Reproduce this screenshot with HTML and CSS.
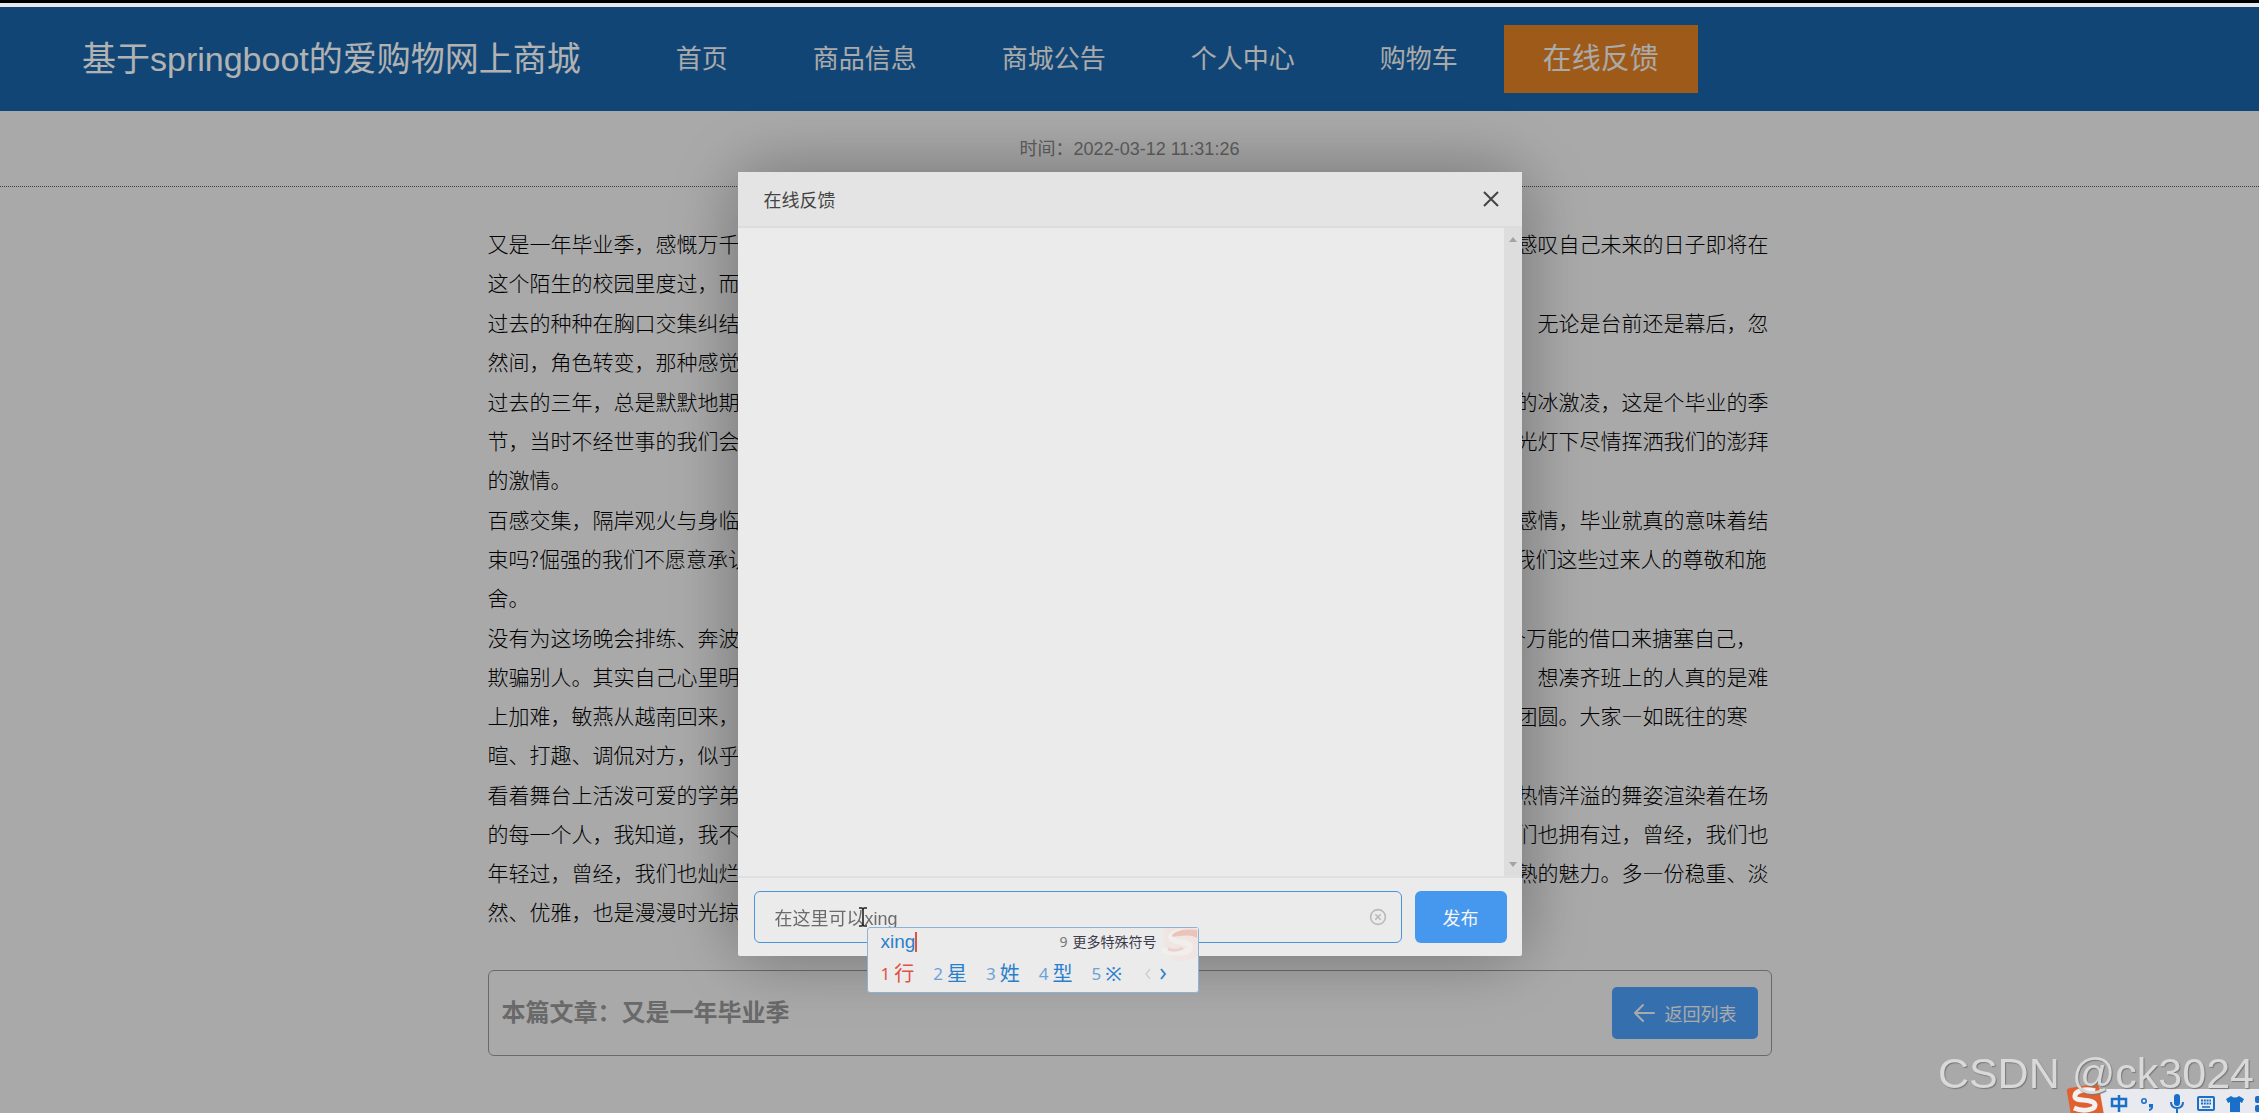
FILE: index.html
```html
<!DOCTYPE html>
<html lang="zh-CN">
<head>
<meta charset="utf-8">
<title>基于springboot的爱购物网上商城</title>
<link rel="stylesheet" href="styles.css">
</head>
<body>
<div class="window-edge"></div>
<header class="site-header">
  <div class="brand">基于springboot的爱购物网上商城</div>
  <nav class="nav">
    <a href="#">首页</a>
    <a href="#">商品信息</a>
    <a href="#">商城公告</a>
    <a href="#">个人中心</a>
    <a href="#">购物车</a>
    <a href="#" class="active">在线反馈</a>
  </nav>
</header>
<div class="meta">时间：2022-03-12 11:31:26</div>
<main class="content">
  <article class="article">
    <p>又是一年毕业季，感慨万千，还记得自己刚刚进学校那时候的情景，我拖着沉重的行李箱站在那偌大的操场上，感叹自己未来的日子即将在<br>这个陌生的校园里度过，而如今断然没有了当时的感慨，我想这就是成长吧！</p>
    <p>过去的种种在胸口交集纠结，像打翻的五味瓶，甜蜜，酸楚，苦涩，一并涌上心头。一直都是毕业晚会的参与者　无论是台前还是幕后，忽<br>然间，角色转变，那种感觉确实难以用语言表达。</p>
    <p>过去的三年，总是默默地期盼着这个好雨时节，因为这时候，会有灿烂的阳光，会有满目的百花争艳，会有香甜的冰激凌，这是个毕业的季<br>节，当时不经世事的我们会殷切地期待学校的毕业晚会，可以让我们在舞台上展现自己，能够站在那个五彩的聚光灯下尽情挥洒我们的澎拜<br>的激情。</p>
    <p>百感交集，隔岸观火与身临其境的感觉竟是如此不同。从来没有想过，我们彼此之间会有如此深厚，难以割舍的感情，毕业就真的意味着结<br>束吗?倔强的我们不愿意承认，谁能舍得离开这里?当我们挥手告别的时候，看到的是学弟学妹们眼中所流露出对我们这些过来人的尊敬和施<br>舍。</p>
    <p>没有为这场晚会排练、奔波、劳累过?也许是忙于实习，忙于找工作，忙于写论文，于是我们总可以找到这样一个万能的借口来搪塞自己，<br>欺骗别人。其实自己心里明白，很多事情都已不再像从前那样，大家各奔东西，为了各自的生活四处奔波忙碌着　想凑齐班上的人真的是难<br>上加难，敏燕从越南回来，刚好赶上这次聚会，多年的老同学终于又能够坐在同一张桌子旁，吃上一顿热闹的大团圆。大家—如既往的寒<br>暄、打趣、调侃对方，似乎一切都没有改变。</p>
    <p>看着舞台上活泼可爱的学弟学妹们，听着他们悠扬动听的歌声，青春的气息扑面而来，他们用最真挚的笑容和那热情洋溢的舞姿渲染着在场<br>的每一个人，我知道，我不羡慕他们的年轻，也不嫉妒他们的激情，因为那样的青春岁月，那样的欢声笑语，我们也拥有过，曾经，我们也<br>年轻过，曾经，我们也灿烂过，如今的我们，少了一份轻狂与冲动，多了一份理智和从容，更有了一种自己的成熟的魅力。多—份稳重、淡<br>然、优雅，也是漫漫时光掠过的痕迹。</p>
  </article>
  <section class="article-bar">
    <h2>本篇文章：又是一年毕业季</h2>
    <button type="button" class="back">
      <svg width="22" height="20" viewBox="0 0 22 20" fill="none" stroke="currentColor" stroke-width="2" stroke-linecap="round" stroke-linejoin="round"><path d="M21 10H2M10 2L2 10L10 18"/></svg>
      <span>返回列表</span>
    </button>
  </section>
</main>

<div class="overlay">
  <form class="modal" role="dialog" aria-labelledby="dialog-title">
    <div class="modal-head">
      <span id="dialog-title">在线反馈</span>
      <button type="button" class="close" aria-label="关闭">
        <svg width="16" height="16" viewBox="0 0 16 16" fill="none" stroke="currentColor" stroke-width="2"><path d="M1 1L15 15M15 1L1 15"/></svg>
      </button>
    </div>
    <div class="messages">
      <div class="scroll">
        <svg width="10" height="6" viewBox="0 0 10 6"><path d="M1 5L5 0L9 5Z" fill="#a3a3a3"/></svg>
        <svg width="10" height="6" viewBox="0 0 10 6"><path d="M1 1L5 6L9 1Z" fill="#a3a3a3"/></svg>
      </div>
    </div>
    <div class="compose">
      <div class="field">
        <input type="text" aria-label="反馈内容" value="在这里可以xing">
        <svg class="clear" width="18" height="18" viewBox="0 0 18 18" fill="none" stroke="#b9b9b9" stroke-width="1.6"><circle cx="9" cy="9" r="7.4"/><path d="M6.3 6.3L11.7 11.7M11.7 6.3L6.3 11.7"/></svg>
        <svg class="ibeam" width="10" height="20" viewBox="0 0 10 20" fill="none" stroke="#222" stroke-width="1.6"><path d="M1 1H3.5Q5 1 5 3Q5 1 6.500 1H9M5 3V17M1 19H3.500Q5 19 5 17Q5 19 6.500 19H9"/></svg>
        <div class="ime">
          <svg class="ime-logo" width="42" height="34" viewBox="0 0 42 34" fill="none"><path d="M8 0H42V28Q32 34 20 33Q4 20 8 0Z" fill="#efe6e3"/><path d="M38 6C24 1 12 6 16 11C20 15 35 13 34 20C32 26 16 26 6 22" stroke="#f2eeec" stroke-width="6"/><path d="M16 7C22 1 32 1 41 2V10C33 6 24 8 17 9Z" fill="#ecc3b8"/><path d="M12 21Q20 24 27 20" stroke="#ead3cd" stroke-width="3"/></svg>
          <div class="ime-top">
            <span class="typed">xing</span>
            <span class="more"><i>9</i>更多特殊符号</span>
          </div>
          <div class="ime-row">
            <span class="first"><i>1</i>行</span>
            <span><i>2</i>星</span>
            <span><i>3</i>姓</span>
            <span><i>4</i>型</span>
            <span><i>5</i>※</span>
            <svg class="pager" width="22" height="12" viewBox="0 0 22 12" fill="none" stroke-width="2"><path d="M5 1L1 6L5 11" stroke="#d0d0d0" stroke-width="1.500"/><path d="M16 1L20 6L16 11" stroke="#3a86cc"/></svg>
          </div>
        </div>
      </div>
      <button type="submit" class="send">发布</button>
    </div>
  </form>
</div>

<div class="ime-bar">
  <svg class="sogou" width="38" height="32" viewBox="0 0 38 32"><path d="M4 5L28 1Q32 0 33 4L38 32H5L1 9Q0 6 4 5Z" fill="#e2602f"/><path d="M29 8C19 5 8 8 9 14C10 19 28 15 29 22C29 27 17 29 8 25" fill="none" stroke="#f2f2f2" stroke-width="5"/></svg>
  <div class="ime-icons">
    <svg width="18" height="18" viewBox="0 0 18 18" fill="none" stroke="#1a6fc8" stroke-width="2.500"><path d="M2 5H16V12H2ZM9 1V18"/></svg>
    <svg width="18" height="18" viewBox="0 0 18 18"><circle cx="5" cy="7" r="2.200" fill="none" stroke="#1a6fc8" stroke-width="1.600"/><path d="M10 10H14V13Q14 16 10 17V15Q12 14.500 12 13.500H10Z" fill="#1a6fc8"/></svg>
    <svg width="18" height="20" viewBox="0 0 18 20"><rect x="6" y="0" width="6" height="12" rx="3" fill="#1a6fc8"/><path d="M3 8Q3 14 9 14Q15 14 15 8M9 14V20" fill="none" stroke="#1a6fc8" stroke-width="2"/></svg>
    <svg width="18" height="18" viewBox="0 0 18 18"><rect x="1" y="3" width="16" height="13" rx="1" fill="none" stroke="#1a6fc8" stroke-width="2"/><path d="M4 6.500H14M4 9.500H14" stroke="#1a6fc8" stroke-width="2" stroke-dasharray="2 .8"/><path d="M5 13H13" stroke="#1a6fc8" stroke-width="1.600"/></svg>
    <svg width="18" height="18" viewBox="0 0 18 18"><path d="M5 2Q9 5 13 2L18 5L16 9L14 8V18H4V8L2 9L0 5Z" fill="#1a6fc8"/></svg>
    <svg width="18" height="18" viewBox="0 0 18 18" fill="#1a6fc8"><rect x="0" y="2" width="7" height="7" rx="2"/><rect x="0" y="11" width="7" height="7" rx="2"/><rect x="10" y="2" width="7" height="7" rx="2"/><rect x="10" y="11" width="7" height="7" rx="2"/></svg>
  </div>
</div>
<div class="watermark">CSDN @ck3024</div>
</body>
</html>
```
FILE: styles.css
```css
* { box-sizing: border-box; }

body {
  margin: 0;
  min-height: 100vh;
  background: #f3f3f3;
  font-family: "Liberation Sans", "Noto Sans CJK SC", sans-serif;
  overflow-x: hidden;
}

button, input { font-family: inherit; }
i { font-style: normal; }
svg { display: block; flex: none; }

.window-edge {
  position: relative;
  z-index: 20;
  height: 7px;
  border-top: 3px solid #000;
  background: #e6eaec;
}

/* header */
.site-header {
  display: flex;
  align-items: center;
  gap: 56px;
  height: 104px;
  padding: 0 82px;
  background: #1764a9;
  color: #fff;
}
.brand { font-size: 34px; line-height: 48px; white-space: nowrap; }
.nav { display: flex; align-items: center; gap: 7px; }
.nav a {
  padding: 0 39px;
  color: #f4f4f4;
  font-size: 26px;
  line-height: 68px;
  text-decoration: none;
  white-space: nowrap;
}
.nav .active { background: #e28125; font-size: 29px; }

.meta {
  padding: 25px 0 23px;
  border-bottom: 1px dotted #555;
  color: #888;
  font-size: 18px;
  line-height: 27px;
  text-align: center;
}

/* article */
.content { max-width: 1284px; margin: 0 auto; padding-top: 37px; }
.article {
  color: #000;
  font-family: "Noto Sans CJK SC", sans-serif;
  font-size: 21px;
  font-weight: 300;
  line-height: 39px;
  white-space: nowrap;
}
.article p { margin: 0 0 1px; }
.article-bar {
  display: flex;
  align-items: center;
  justify-content: space-between;
  margin-top: 39px;
  padding: 16px 13px;
  border: 1px solid #999;
  border-radius: 6px;
}
.article-bar h2 { margin: 0; color: #979797; font-size: 24px; line-height: 36px; }
.back {
  display: flex;
  align-items: center;
  gap: 10px;
  height: 52px;
  padding: 0 21px;
  border: 0;
  border-radius: 5px;
  background: #4da0f9;
  color: #f4f4f4;
  font-size: 18px;
}

/* dialog */
.overlay {
  position: fixed;
  inset: 0;
  z-index: 10;
  display: flex;
  align-items: flex-start;
  justify-content: center;
  padding-top: 172px;
  background: rgba(0, 0, 0, .3);
}
.modal {
  width: 784px;
  border-radius: 2px;
  background: #ebebeb;
  box-shadow: 0 0 72px rgba(0, 0, 0, .35);
}
.modal-head {
  display: flex;
  align-items: center;
  justify-content: space-between;
  height: 56px;
  padding: 0 23px 0 26px;
  border-bottom: 2px solid #dcdcdc;
  background: #e4e4e4;
  color: #444;
  font-size: 18px;
}
.close { padding: 0; border: 0; background: none; color: #444; }
.messages {
  display: flex;
  justify-content: flex-end;
  height: 650px;
  border-bottom: 2px solid #dfdfdf;
}
.scroll {
  display: flex;
  flex-direction: column;
  align-items: center;
  justify-content: space-between;
  width: 18px;
  padding: 9px 0;
  background: #dddddd;
}
.compose { display: flex; gap: 13px; padding: 13px 15px 13px 16px; }
.field { position: relative; flex: 1; }
.field input {
  display: block;
  width: 100%;
  height: 52px;
  padding: 0 20px;
  border: 1px solid #4a94dc;
  border-radius: 6px;
  outline: 0;
  background: transparent;
  color: #6b6b6b;
  font-size: 18px;
}
.clear { position: absolute; top: 17px; right: 15px; }
.ibeam { position: absolute; top: 16px; left: 104px; }
.send {
  width: 92px;
  height: 52px;
  border: 0;
  border-radius: 6px;
  background: #4698ee;
  color: #f4f4f4;
  font-size: 18px;
}

/* input method candidates */
.ime {
  position: absolute;
  top: 36px;
  left: 113px;
  width: 332px;
  height: 66px;
  padding: 0 13px;
  border: 1px solid #8db2d6;
  border-radius: 3px;
  background: #ebebeb;
  font-family: "Noto Sans", "Noto Sans CJK SC", sans-serif;
}
.ime-logo { position: absolute; top: 0; right: 0; }
.ime-top { display: flex; align-items: center; justify-content: space-between; height: 28px; }
.typed {
  border-right: 2px solid #e05244;
  color: #2a7fcb;
  font-family: "Liberation Sans", sans-serif;
  font-size: 19px;
  line-height: 20px;
}
.more { margin-right: 28px; color: #3b3b4b; font-size: 14px; line-height: 20px; }
.more i { margin-right: 5px; color: #777; }
.ime-row { display: flex; align-items: center; gap: 19px; height: 36px; color: #2a7fcb; font-size: 20px; line-height: 36px; }
.ime-row span { display: flex; gap: 4px; }
.ime-row i { color: #6ba3d6; font-size: 17px; }
.ime-row .first, .ime-row .first i { color: #e05244; }
.pager { margin-left: 4px; }

/* input method toolbar */
.ime-bar {
  position: fixed;
  right: 0;
  bottom: 0;
  z-index: 30;
  display: flex;
  align-items: flex-end;
  width: 193px;
  height: 30px;
  overflow: hidden;
}
.sogou { position: relative; z-index: 1; align-self: flex-start; }
.ime-icons {
  display: flex;
  gap: 11px;
  height: 24px;
  margin-left: -10px;
  padding: 5px 0 0 16px;
  background: #e8eaf0;
}

.watermark {
  position: fixed;
  right: 5px;
  bottom: 16px;
  z-index: 31;
  color: #d9d9d9;
  font-size: 43px;
  line-height: 48px;
  text-shadow: 1px 1px 1px #777;
}
```
